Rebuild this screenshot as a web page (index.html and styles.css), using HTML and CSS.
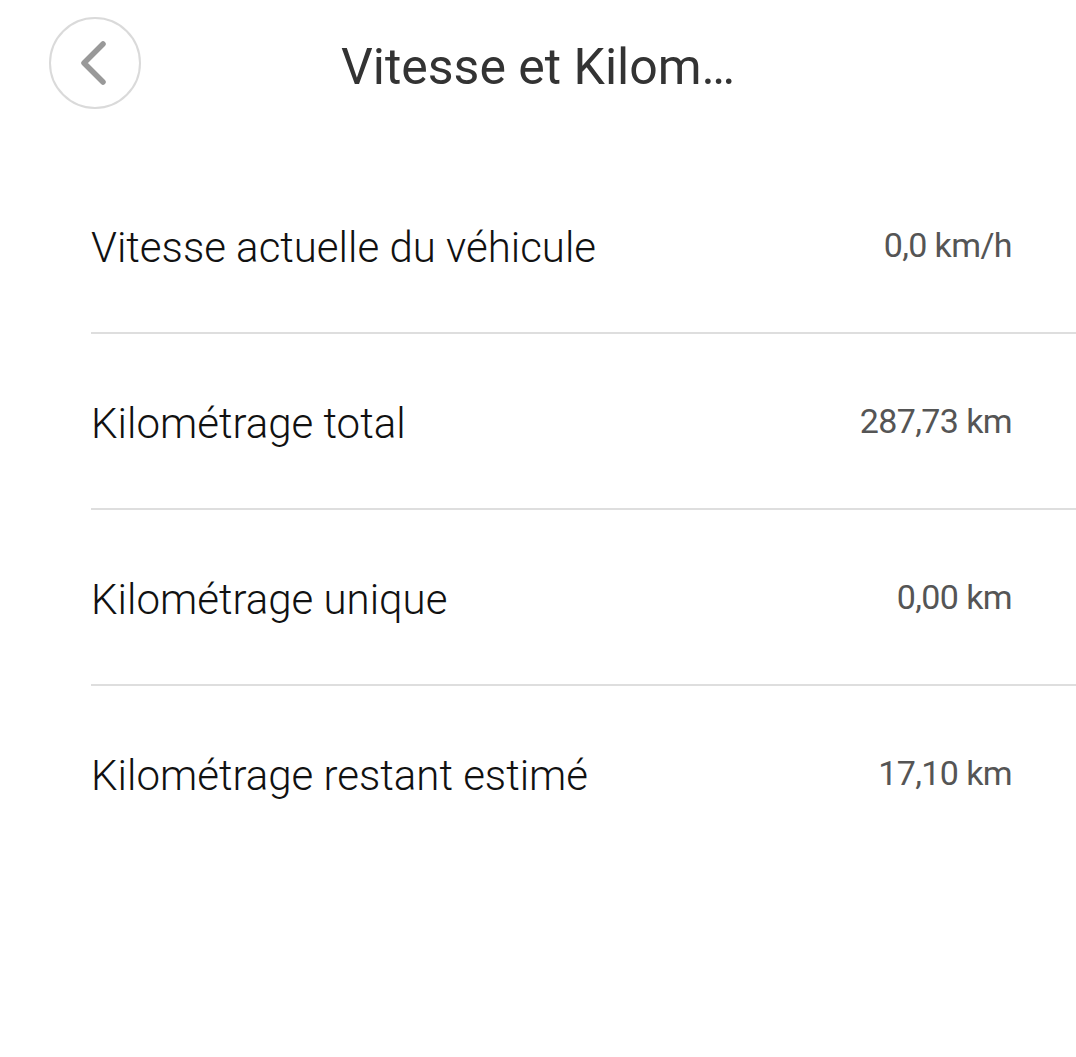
FILE: index.html
```html
<!DOCTYPE html>
<html lang="fr">
<head>
  <meta charset="UTF-8">
  <meta name="viewport" content="width=device-width, initial-scale=1.0">
  <title>Vitesse et Kilométrage</title>
  <link rel="stylesheet" href="styles.css">
</head>
<body>
  <div id="header">
    <button class="back-button" aria-label="Retour">
      <svg width="30" height="46" viewBox="0 0 30 46">
        <path d="M25 4 L6 23 L25 42" fill="none" stroke="#999" stroke-width="5.5" stroke-linecap="round" stroke-linejoin="round"/>
      </svg>
    </button>
    <h1 class="title">Vitesse et Kilom…</h1>
  </div>

  <div id="list">
    <div class="row">
      <span class="label">Vitesse actuelle du véhicule</span>
      <span class="value">0,0 km/h</span>
    </div>
    <div class="row">
      <span class="label">Kilométrage total</span>
      <span class="value">287,73 km</span>
    </div>
    <div class="row">
      <span class="label">Kilométrage unique</span>
      <span class="value">0,00 km</span>
    </div>
    <div class="row">
      <span class="label">Kilométrage restant estimé</span>
      <span class="value">17,10 km</span>
    </div>
  </div>
</body>
</html>
```

FILE: styles.css
```css
body {
  margin: 0;
  background: #fff;
  font-family: Roboto, "Liberation Sans", sans-serif;
  color: #222;
}

#header {
  position: relative;
  height: 126px;
  display: flex;
  justify-content: center;
  align-items: center;
}

.back-button {
  position: absolute;
  left: 49px;
  top: 17px;
  width: 92px;
  height: 92px;
  border: 2px solid #dadada;
  border-radius: 50%;
  background: #fff;
  display: flex;
  justify-content: center;
  align-items: center;
  padding: 0 4px 0 0;
  cursor: pointer;
}

.title {
  margin: 0;
  font-size: 50px;
  font-weight: 400;
  color: #333;
  position: relative;
  top: 4px;
}

#list {
  margin-top: 32px;
  padding-left: 91px;
}

.row {
  height: 174px;
  display: flex;
  justify-content: space-between;
  align-items: center;
  padding-right: 64px;
  border-bottom: 2px solid #dedede;
}

.row:last-child {
  border-bottom: none;
}

.label {
  font-size: 42px;
  font-weight: 300;
  color: #111;
  position: relative;
  top: 2px;
}

.value {
  font-size: 34px;
  font-weight: 400;
  color: #555;
  letter-spacing: -0.6px;
}
```
